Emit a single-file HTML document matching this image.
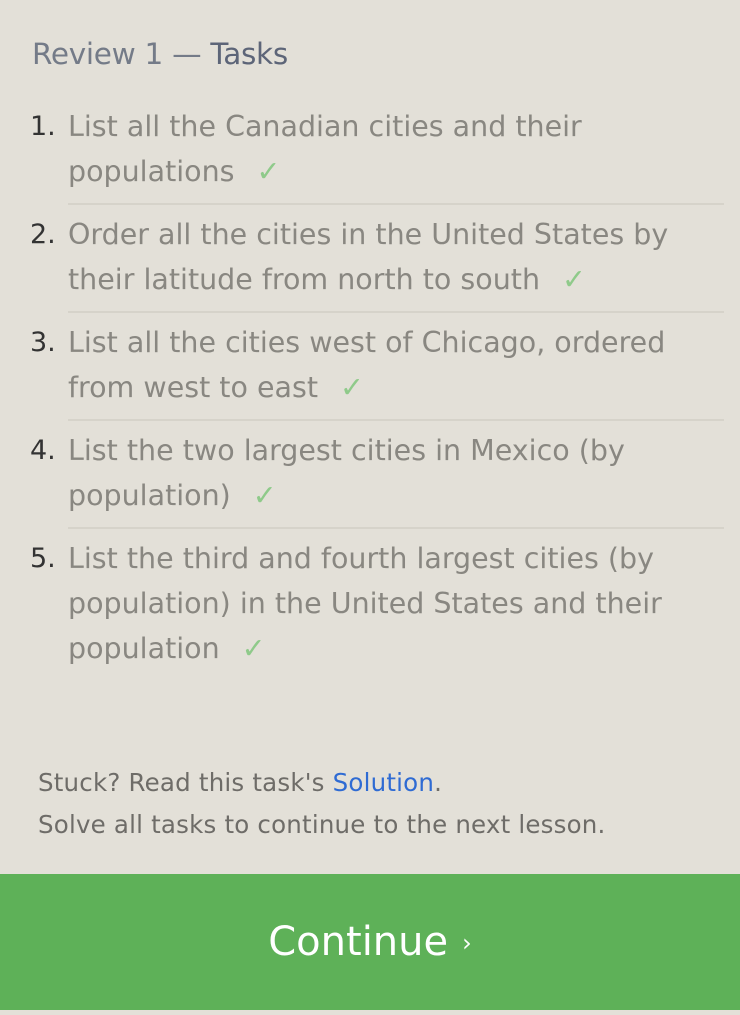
<!DOCTYPE html>
<html><head><meta charset="utf-8"><style>
body{margin:0;width:740px;height:1014px;background:#e3e0d8;font-family:"DejaVu Sans",sans-serif;position:relative;overflow:hidden}
h1{position:absolute;left:32px;top:37px;margin:0;font-weight:normal;font-size:29.5px;color:#747b88;letter-spacing:-0.3px}
h1 b{color:#5d6578;font-weight:normal}
ol{position:absolute;left:0;top:104px;margin:0;padding:0;list-style:none;width:724px}
li{position:relative;margin-left:68px;font-size:28.5px;line-height:45px;color:#898781;padding-bottom:9px;margin-bottom:7px;border-bottom:2px solid #d6d3ca;white-space:nowrap}
li:last-child{border-bottom:none}
li span.n{position:absolute;left:-38px;top:0;color:#333;font-size:27px}
.c{color:#8fca8a;margin-left:22px}
.f{position:absolute;left:38px;top:762px;font-size:24.5px;line-height:42px;color:#6e6c68;letter-spacing:0.2px}
.f a{color:#2f6bd3;text-decoration:none}
.btn{position:absolute;left:0;top:874px;width:740px;height:136px;background:#5eb158;color:#fff;font-size:40px;text-align:center;line-height:136px}
.btn small{font-size:24px;margin-left:14px;position:relative;top:-4px}
</style></head><body>
<h1>Review 1 — <b>Tasks</b></h1>
<ol>
<li><span class="n">1.</span>List all the Canadian cities and their<br>populations<span class="c">✓</span></li>
<li><span class="n">2.</span>Order all the cities in the United States by<br>their latitude from north to south<span class="c">✓</span></li>
<li><span class="n">3.</span>List all the cities west of Chicago, ordered<br>from west to east<span class="c">✓</span></li>
<li><span class="n">4.</span>List the two largest cities in Mexico (by<br>population)<span class="c">✓</span></li>
<li><span class="n">5.</span>List the third and fourth largest cities (by<br>population) in the United States and their<br>population<span class="c">✓</span></li>
</ol>
<div class="f">Stuck? Read this task's <a>Solution</a>.<br>Solve all tasks to continue to the next lesson.</div>
<div class="btn">Continue<small>›</small></div>
</body></html>
